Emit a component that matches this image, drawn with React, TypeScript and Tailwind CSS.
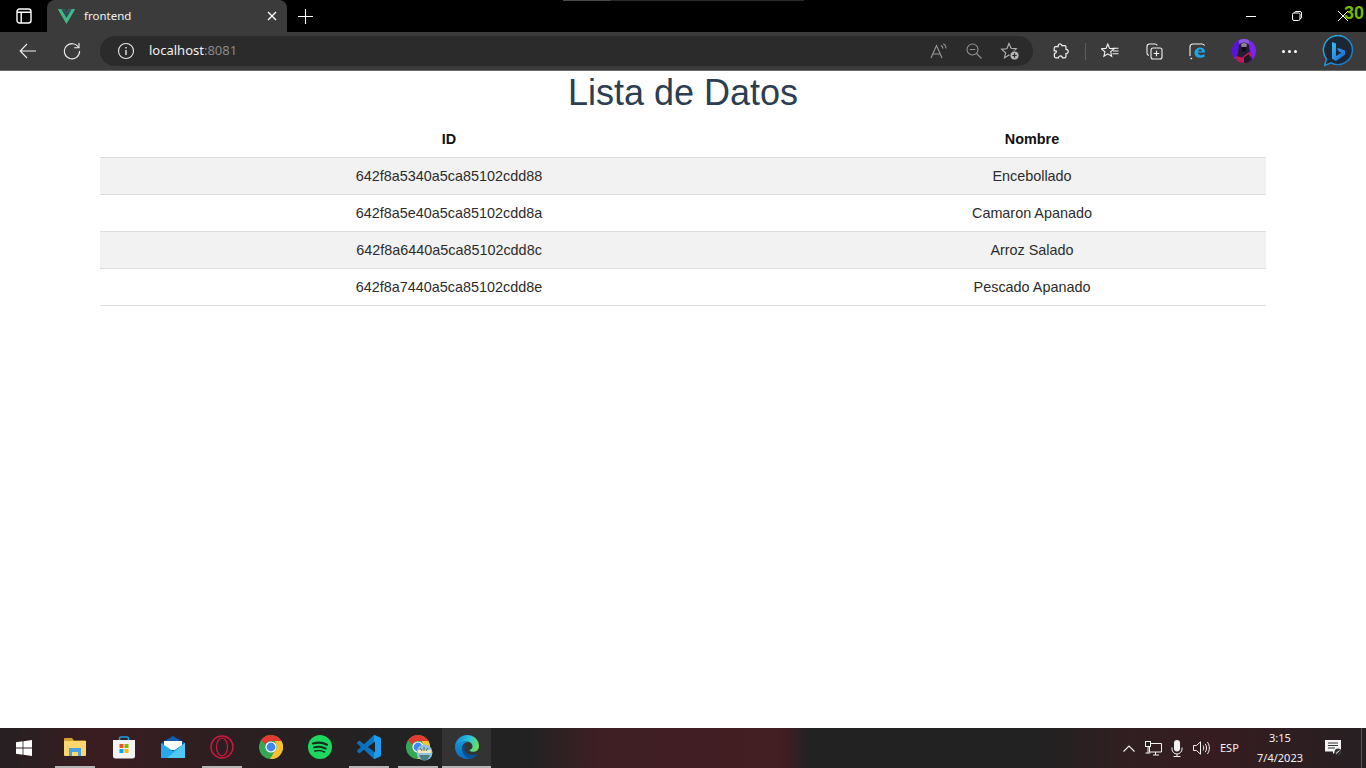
const rows = [
  { id: "642f8a5340a5ca85102cdd88", nombre: "Encebollado" },
  { id: "642f8a5e40a5ca85102cdd8a", nombre: "Camaron Apanado" },
  { id: "642f8a6440a5ca85102cdd8c", nombre: "Arroz Salado" },
  { id: "642f8a7440a5ca85102cdd8e", nombre: "Pescado Apanado" },
];

const TabStrip = () => {
  return (
    <div className="relative flex h-8 shrink-0 items-end bg-black text-white">
      <div className="absolute left-[563px] top-0 flex h-px w-[241px]">
        <div className="w-12 bg-[#4a4a4a]" />
        <div className="flex-1 bg-[#2a2a2a]" />
      </div>
      <div className="flex h-8 w-[47px] items-center justify-center">
        <svg width="16" height="16" viewBox="0 0 16 16" fill="none" stroke="white" strokeWidth="1.4">
          <rect x="1" y="1" width="14" height="14" rx="2.5" />
          <path d="M1 4.2h14M5.2 4.2V15" />
        </svg>
      </div>
      <div className="flex h-8 w-[240px] items-center rounded-t-lg bg-[#3b3b3b] pl-[11px] pr-[10px]">
        <svg width="17" height="15" viewBox="0 0 256 221">
          <path fill="#41B883" d="M204.8 0H256L128 220.8 0 0h97.92L128 51.2 157.44 0h47.36Z" />
          <path fill="#41B883" d="m0 0 128 220.8L256 0h-51.2L128 132.48 50.56 0H0Z" />
          <path fill="#35495E" d="M50.56 0 128 133.12 204.8 0h-47.36L128 51.2 97.92 0H50.56Z" />
        </svg>
        <span className="ml-[9px] flex-1 font-['Noto_Sans',sans-serif] text-[11.5px] text-[#f2f2f2]">frontend</span>
        <svg width="10" height="10" viewBox="0 0 10 10" stroke="white" strokeWidth="1.3">
          <path d="M1 1l8 8M9 1l-8 8" />
        </svg>
      </div>
      <div className="flex h-8 w-9 items-center justify-center">
        <svg width="15" height="15" viewBox="0 0 15 15" stroke="white" strokeWidth="1.1">
          <path d="M7.5 0v15M0 7.5h15" />
        </svg>
      </div>
      <div className="flex-1" />
      <div className="flex h-8 w-[138px] items-center">
        <div className="flex w-[46px] justify-center">
          <div className="h-px w-[10px] bg-white" />
        </div>
        <div className="flex w-[46px] justify-center">
          <svg width="10" height="10" viewBox="0 0 10 10" fill="none" stroke="white" strokeWidth="1">
            <rect x="0.5" y="2" width="7.5" height="7.5" rx="1.5" />
            <path d="M2.5 2V1.8A1.3 1.3 0 0 1 3.8.5h4.2A1.5 1.5 0 0 1 9.5 2v4.2A1.3 1.3 0 0 1 8 7.5" />
          </svg>
        </div>
        <div className="flex w-[46px] justify-center">
          <svg width="10" height="10" viewBox="0 0 10 10" stroke="white" strokeWidth="1">
            <path d="M0 0l10 10M10 0L0 10" />
          </svg>
        </div>
      </div>
      <span className="absolute left-[1344px] top-[2px] font-['Liberation_Sans',sans-serif] text-[18px] font-bold leading-[22px] text-[#76b900]">
        30
      </span>
    </div>
  );
};

const Toolbar = () => {
  return (
    <div className="flex h-[39px] shrink-0 items-center border-b border-b-[#6b6b6b] bg-[#3b3b3b] pl-[6px] text-white">
      <div className="flex w-11 justify-center">
        <svg width="18" height="16" viewBox="0 0 18 16" fill="none" stroke="#f2f2f2" strokeWidth="1.1">
          <path d="M17 8H1.2M8 1L1.2 8 8 15" />
        </svg>
      </div>
      <div className="flex w-11 justify-center">
        <svg width="18" height="18" viewBox="0 0 18 18" fill="none" stroke="#f2f2f2" strokeWidth="1.1">
          <path d="M15.6 5.5A7.6 7.6 0 1 0 16.6 9" />
          <path d="M16 1v4.8h-4.8" />
        </svg>
      </div>
      <div className="ml-[6px] flex h-[30px] w-[933px] items-center rounded-full bg-[#2b2b2b] pl-[17px]">
        <svg width="18" height="18" viewBox="0 0 18 18" fill="none" stroke="#e8e8e8" strokeWidth="1.1">
          <circle cx="9" cy="9" r="7.5" />
          <path d="M9 8v5M9 5v1.4" strokeWidth="1.4" />
        </svg>
        <span className="ml-[14px] flex-1 font-['Noto_Sans',sans-serif] text-[13px] text-[#f2f2f2]">
          localhost<span className="text-[#8a8a8a]">:8081</span>
        </span>
        <svg width="18" height="18" viewBox="0 0 18 18" fill="none" stroke="#9a9a9a" strokeWidth="1.1">
          <path d="M1 16L6.5 3.5 12 16M3 12h7" />
          <path d="M11 3.5c1.2.6 1.8 1.6 1.9 3M13.4 1.8c1.7.9 2.700 2.600 2.800 4.600" />
        </svg>
        <div className="ml-[18px]">
          <svg width="16" height="16" viewBox="0 0 16 16" fill="none" stroke="#8f8f8f" strokeWidth="1.1">
            <circle cx="6.5" cy="6.5" r="5.5" />
            <path d="M3.8 6.5h5.4M10.5 10.5L15.500 15.500" />
          </svg>
        </div>
        <div className="ml-[18px] mr-[13px]">
          <svg width="20" height="20" viewBox="0 0 20 20" fill="none" stroke="#b5b5b5" strokeWidth="1.1">
            <path d="M9 2.500l2.100 4.800 5.200.5-3.900 3.500 1.100 5.100L9 14l-4.500 2.900 1.100-5.100-3.900-3.500 5.200-.5z" />
            <circle cx="14.500" cy="14.500" r="4.600" fill="#b5b5b5" stroke="#2b2b2b" strokeWidth="1" />
            <path d="M14.500 12.300v4.400M12.300 14.500h4.400" stroke="#2b2b2b" strokeWidth="1.200" />
          </svg>
        </div>
      </div>
      <div className="ml-[6px] flex w-11 justify-center">
        <svg width="16" height="17" viewBox="0 0 16 17" fill="none" stroke="#f2f2f2" strokeWidth="1.2">
          <path d="M6 1.2c1.4-.7 2.700.1 2.900 1.500h2.700c.8 0 1.400.6 1.400 1.400v2.200c1.600.2 2.400 1.300 2.200 2.600-.2 1-1 1.700-2.200 1.700v2.600c0 .8-.6 1.600-1.400 1.600H9.600c-.3-1.400-1.100-2-2.200-2-1 0-1.800.7-2 2H3c-.9 0-1.600-.8-1.600-1.600v-2.500c1.300-.2 2-1 2-2.100S2.600 7.900 1.200 7.800V5.200c0-.9.7-1.600 1.600-1.600h2.400C5 2.600 5.200 1.700 6 1.200z" />
        </svg>
      </div>
      <div className="ml-[2px] h-[17px] w-px bg-[#5e5e5e]" />
      <div className="ml-[2px] flex w-11 justify-center">
        <svg width="18" height="16" viewBox="0 0 18 16" fill="none" stroke="#f2f2f2" strokeWidth="1.1">
          <path d="M6.800 1l1.800 4.400 4.600.4-3.500 3 1 4.500-3.900-2.400-3.900 2.400 1-4.500L.4 5.800 5 5.400z" />
          <path d="M12 8h5.500M11.500 5.300h6M11.500 10.800h6" />
        </svg>
      </div>
      <div className="flex w-11 justify-center">
        <svg width="17" height="17" viewBox="0 0 17 17" fill="none" stroke="#f2f2f2" strokeWidth="1.1">
          <path d="M3 12.500C1.800 12.200 1 11.200 1 10V3.500C1 2.100 2.100 1 3.500 1H9c1 0 1.800.5 2.300 1.400" />
          <rect x="5" y="5" width="11" height="11" rx="2" />
          <path d="M10.500 7.800v5.400M7.800 10.500h5.400" />
        </svg>
      </div>
      <div className="flex w-11 justify-center">
        <svg width="18" height="17" viewBox="0 0 18 17" fill="none">
          <path d="M1 13V4a3 3 0 0 1 3-3h9a3 3 0 0 1 2.600 1.500" stroke="#f2f2f2" strokeWidth="1.1" />
          <path d="M1.500 15l1.600 1" stroke="#f2f2f2" strokeWidth="1.1" />
          <path d="M5.500 10c0-3.200 2.500-5.500 5.700-5.500 2.900 0 4.900 1.900 4.900 5H9c.1 1.800 1.400 2.700 3 2.700 1.200 0 2.400-.4 3.500-1.100v2.700c-1.100.6-2.500 1-3.900 1-3.800 0-6.100-2-6.100-4.800zm3.700-1.800h3.700c-.1-1.100-.8-1.700-1.800-1.700-1 0-1.700.6-1.900 1.700z" fill="#1ea5e8" />
        </svg>
      </div>
      <div className="ml-[2px] flex w-11 justify-center">
        <svg width="24" height="24" viewBox="0 0 24 24">
          <defs>
            <clipPath id="avatarClip">
              <circle cx="12" cy="12" r="12" />
            </clipPath>
          </defs>
          <g clipPath="url(#avatarClip)">
            <rect width="24" height="24" fill="#7a22f0" />
            <circle cx="3" cy="10" r="8" fill="#5a14d8" />
            <circle cx="12" cy="3" r="5" fill="#8a5ae0" />
            <path d="M7 6c1.500-3.500 8.500-3.500 10 0l1 7 3 11H3l3-10z" fill="#241c30" />
            <path d="M9 5c1.500-1.500 4.500-1.500 6 0l-.5 3h-5z" fill="#8c8494" />
            <path d="M9.500 8h5l-.8 4.500h-3.400z" fill="#0f0c14" />
            <path d="M4 17l6 1.500 7-5.500 3 2-5 9H5z" fill="#c01a55" />
            <path d="M12 18.500l5-3.500 1 4-2.500 5H12z" fill="#1c1626" />
          </g>
        </svg>
      </div>
      <div className="ml-px flex w-11 justify-center gap-[3px]">
        <div className="size-[3px] rounded-full bg-white" />
        <div className="size-[3px] rounded-full bg-white" />
        <div className="size-[3px] rounded-full bg-white" />
      </div>
      <div className="ml-[5px] flex w-11 justify-center">
        <svg width="32" height="32" viewBox="0 0 32 32" fill="none">
          <defs>
            <linearGradient id="bingB" x1="0" y1="0" x2="1" y2="1">
              <stop offset="0" stopColor="#37bdf8" />
              <stop offset="1" stopColor="#1b5fd6" />
            </linearGradient>
            <linearGradient id="bingRing" x1="0" y1="0" x2="1" y2="1">
              <stop offset="0" stopColor="#2ab8f0" />
              <stop offset="1" stopColor="#1570c8" />
            </linearGradient>
          </defs>
          <path d="M2.500 30.500l2-6.500A14.500 14.500 0 1 1 9 27.800z" stroke="url(#bingRing)" strokeWidth="1.400" fill="#1d2733" strokeLinejoin="round" />
          <path d="M10 7l4 1.500v12.500l5.500-3.200-2.700-1.300-1.600-3.700 7.800 2.700v4.300L14 26l-4-2.200z" fill="url(#bingB)" />
        </svg>
      </div>
    </div>
  );
};

const DataTable = () => {
  return (
    <main className="flex-1 bg-white px-[100px] font-['Liberation_Sans',sans-serif]">
      <h1 className="pt-[1px] text-center text-[36px] font-normal leading-[41px] text-[#2c3e50]">Lista de Datos</h1>
      <table className="mt-2 w-full border-collapse text-center text-[14.4px] leading-[16px] text-[#2c2c2c]">
        <thead>
          <tr className="border-b border-b-[#dddddd]">
            <th className="h-9 w-[698px] font-bold text-[#111]">ID</th>
            <th className="h-9 font-bold text-[#111]">Nombre</th>
          </tr>
        </thead>
        <tbody>
          {rows.map((row, i) => (
            <tr key={row.id} className={`border-b border-b-[#dddddd] ${i % 2 === 0 ? "bg-[#f2f2f2]" : "bg-white"}`}>
              <td className="h-[37px]">{row.id}</td>
              <td className="h-[37px]">{row.nombre}</td>
            </tr>
          ))}
        </tbody>
      </table>
    </main>
  );
};

const AppButton = ({ open, active, children }: { open?: boolean; active?: boolean; children: React.ReactNode }) => {
  return (
    <div className={`flex h-10 w-[49px] flex-col items-center ${active ? "bg-[#333333]" : ""}`}>
      <div className="flex flex-1 items-center justify-center">{children}</div>
      <div className={`h-[2px] ${active ? "w-full" : "w-10"} ${open || active ? "bg-[#b4b4b4]" : ""}`} />
    </div>
  );
};

const ChromeIcon = () => {
  return (
    <svg width="24" height="24" viewBox="0 0 24 24">
      <circle cx="12" cy="12" r="12" fill="#34a853" />
      <path d="M12 0a12 12 0 0 1 10.400 6H12a6 6 0 0 0-5.600 3.700L2.100 5.200A12 12 0 0 1 12 0z" fill="#e33b2e" />
      <path d="M22.400 6A12 12 0 0 1 11 24l4.800-8.100A6 6 0 0 0 16.500 8l-.5-2z" fill="#fbc02d" />
      <circle cx="12" cy="12" r="5.600" fill="#ffffff" />
      <circle cx="12" cy="12" r="4.400" fill="#4285f4" />
    </svg>
  );
};

const Taskbar = () => {
  return (
    <div className="flex h-10 shrink-0 items-center bg-[linear-gradient(90deg,#262022_0px,#3a1d21_100px,#2a1f21_250px,#222222_400px,#232222_530px,#3e1f24_600px,#441e23_780px,#222222_810px,#222222_1040px,#301f21_1120px,#361c20_1220px,#262022_1366px)] font-['Noto_Sans',sans-serif] text-white">
      <div className="flex w-[50px] justify-center pr-[2px]">
        <svg width="16" height="16" viewBox="0 0 16 16" fill="white">
          <path d="M0 2.300L6.600 1.300V7.600H0zM7.400 1.200L16 0V7.600H7.400zM0 8.400H6.600V14.700L0 13.700zM7.400 8.400H16V16L7.400 14.800z" />
        </svg>
      </div>
      <AppButton open>
        <svg width="22" height="20" viewBox="0 0 22 20">
          <path d="M0 2a1 1 0 0 1 1-1h7l2 2.500h11a1 1 0 0 1 1 1V6H0z" fill="#d9a02c" />
          <path d="M0 4h22v14a1 1 0 0 1-1 1H1a1 1 0 0 1-1-1z" fill="#fbd76e" />
          <path d="M5 11h12v8h-3v-4H8v4H5z" fill="#4a9fe0" />
        </svg>
      </AppButton>
      <AppButton>
        <svg width="24" height="24" viewBox="0 0 24 24">
          <path d="M7.500 6V3.500a1.500 1.500 0 0 1 1.500-1.500h6a1.500 1.500 0 0 1 1.500 1.500V6" fill="none" stroke="#1ba1e2" strokeWidth="1.600" />
          <path d="M1 5h22v16a2.500 2.500 0 0 1-2.500 2.500h-17A2.500 2.500 0 0 1 1 21z" fill="#f4f4f4" />
          <rect x="7.500" y="9" width="4" height="4" fill="#f25022" />
          <rect x="12.500" y="9" width="4" height="4" fill="#7fba00" />
          <rect x="7.500" y="14" width="4" height="4" fill="#00a4ef" />
          <rect x="12.500" y="14" width="4" height="4" fill="#ffb900" />
        </svg>
      </AppButton>
      <AppButton>
        <svg width="24" height="22" viewBox="0 0 24 22">
          <path d="M0 7L12 0l12 7v3H0z" fill="#0f5fb0" />
          <path d="M3 5h18v9H3z" fill="#ffffff" />
          <path d="M0 7l12 8 12-8v15H0z" fill="#28a8ea" />
          <path d="M24 7v15H6z" fill="#50c8f5" />
        </svg>
      </AppButton>
      <AppButton open>
        <svg width="24" height="24" viewBox="0 0 24 24" fill="none" stroke="#d3183f">
          <circle cx="12" cy="12" r="11" strokeWidth="1.400" />
          <ellipse cx="12" cy="12" rx="5.500" ry="9" strokeWidth="1.200" />
        </svg>
      </AppButton>
      <AppButton>
        <ChromeIcon />
      </AppButton>
      <AppButton>
        <svg width="24" height="24" viewBox="0 0 24 24" fill="none">
          <circle cx="12" cy="12" r="12" fill="#1ed760" />
          <path d="M5 8.500c4.600-1.300 10-1 14 1.200" stroke="#13301d" strokeWidth="2.200" strokeLinecap="round" />
          <path d="M6 12.400c3.900-1 8.500-.7 11.800 1.200" stroke="#13301d" strokeWidth="1.900" strokeLinecap="round" />
          <path d="M6.800 16c3.200-.8 6.800-.5 9.700 1" stroke="#13301d" strokeWidth="1.500" strokeLinecap="round" />
        </svg>
      </AppButton>
      <AppButton open>
        <svg width="24" height="24" viewBox="0 0 24 24">
          <defs>
            <linearGradient id="vsGrad" x1="0" y1="0" x2="1" y2="0">
              <stop offset="0" stopColor="#0a6db8" />
              <stop offset="0.7" stopColor="#0a78c6" />
              <stop offset="0.7" stopColor="#1f9cf0" />
              <stop offset="1" stopColor="#1f9cf0" />
            </linearGradient>
          </defs>
          <path
            fill="url(#vsGrad)"
            d="M23.150 2.587L18.210.21a1.494 1.494 0 0 0-1.705.29l-9.460 8.630-4.120-3.128a.999.999 0 0 0-1.276.057L.327 7.261A1 1 0 0 0 .326 8.740L3.899 12 .326 15.260a1 1 0 0 0 .001 1.479L1.650 17.940a.999.999 0 0 0 1.276.057l4.120-3.128 9.460 8.630a1.492 1.492 0 0 0 1.704.290l4.942-2.377A1.500 1.500 0 0 0 24 20.060V3.939a1.500 1.500 0 0 0-.850-1.352zm-5.146 14.861L10.826 12l7.178-5.448v10.896z"
          />
        </svg>
      </AppButton>
      <AppButton open>
        <div className="relative size-6">
          <ChromeIcon />
          <svg className="absolute left-[10px] top-[9px]" width="17" height="17" viewBox="0 0 17 17">
            <circle cx="8.500" cy="8.500" r="8" fill="#8fc4dc" />
            <path d="M2 6h13v3H2z" fill="#efe6c2" />
            <path d="M4 4l2 3M8 3v4M12 4l-2 3" stroke="#7a6a3a" strokeWidth="1" />
            <path d="M3 11h11l-2.500 5h-6z" fill="#4a7f8a" />
          </svg>
        </div>
      </AppButton>
      <AppButton active>
        <svg width="24" height="24" viewBox="0 0 24 24">
          <defs>
            <linearGradient id="edgeTop" x1="0" y1="0.300" x2="1" y2="0.600">
              <stop offset="0" stopColor="#0f86d6" />
              <stop offset="0.500" stopColor="#2cc3d8" />
              <stop offset="1" stopColor="#6ee05a" />
            </linearGradient>
            <linearGradient id="edgeLeft" x1="0" y1="0" x2="0" y2="1">
              <stop offset="0" stopColor="#1593dd" />
              <stop offset="1" stopColor="#0a6cc0" />
            </linearGradient>
          </defs>
          <path d="M12 0C18.500 0 24 4.600 24 11c0 3.800-2.700 5.800-6 5.800-2 0-3.500-.7-3.700-1.800 2-.6 3.200-2 3.200-3.600 0-3-3-4.900-6-4.900C7 6.500 1.500 8.500 0 12 0 5 5.500 0 12 0z" fill="url(#edgeTop)" />
          <path d="M0 12c1.500-3.500 6-5.500 10.500-5.500 1 0 2 .2 3 .6-4.500.3-6.300 3.200-6.300 6 0 5 4 9.500 9.300 10-1.300.6-2.900.9-4.500.9C5.500 24 0 19 0 12z" fill="url(#edgeLeft)" />
          <path d="M11.500 10c-2.800.6-4.300 2.600-4.300 4.600 0 4.500 3.800 9 9.300 9.300 2.700-1 4.800-2.900 6-5.400-1.500.9-3.500 1.300-5.300 1.300-4.300 0-7.900-2.700-7.900-6 0-1.400.7-2.900 2.200-3.800z" fill="#0c4f92" />
        </svg>
      </AppButton>
      <div className="flex-1" />
      <div className="flex w-6 justify-center">
        <svg width="12" height="7" viewBox="0 0 12 7" fill="none" stroke="#f2f2f2" strokeWidth="1.100">
          <path d="M.500 6.500L6 1l5.500 5.500" />
        </svg>
      </div>
      <div className="flex w-6 justify-center">
        <svg width="17" height="15" viewBox="0 0 17 15" fill="none" stroke="#f2f2f2" strokeWidth="1">
          <path d="M4.500 2.500h12v8.500h-12zM8 14h6M10.500 11v3" />
          <rect x="0.500" y="0.500" width="5" height="5" fill="#222" />
          <path d="M3 5.500V12M.5 12h5" />
        </svg>
      </div>
      <div className="flex w-6 justify-center">
        <svg width="12" height="17" viewBox="0 0 12 17" fill="none">
          <rect x="3" y="0" width="6" height="11.500" rx="3" fill="#f2f2f2" />
          <path d="M1 7.500v1.500a5 5 0 0 0 10 0V7.500M6 14v2.500M2.500 16.500h7" stroke="#f2f2f2" strokeWidth="1" />
        </svg>
      </div>
      <div className="flex w-6 justify-center">
        <svg width="17" height="14" viewBox="0 0 17 14" fill="none" stroke="#f2f2f2" strokeWidth="1">
          <path d="M.500 4.500h3L7.500.800v12.400L3.500 9.500h-3z" />
          <path d="M10 4.500c1 1.500 1 3.500 0 5M12.200 2.800c1.800 2.500 1.800 5.900 0 8.400M14.400 1c2.600 3.500 2.600 8.500 0 12" />
        </svg>
      </div>
      <div className="w-[34px] pl-[7px] text-[11px] leading-[14px] text-[#f2f2f2]">ESP</div>
      <div className="w-[66px] text-center text-[11px] leading-[20px] text-[#f2f2f2]">
        <div>3:15</div>
        <div>7/4/2023</div>
      </div>
      <div className="flex w-[40px] justify-center">
        <svg width="17" height="16" viewBox="0 0 17 16">
          <path d="M0 0h16v11.500h-5L8 14v-2.500H0z" fill="#f4f4f4" />
          <path d="M3 3h10M3 5.500h10M3 8h7" stroke="#333" strokeWidth="1" />
          <circle cx="13" cy="12" r="3.500" fill="#333" />
          <path d="M11 13.500l3.500-3" stroke="#f4f4f4" strokeWidth="1" />
        </svg>
      </div>
      <div className="ml-2 h-10 w-[5px] border-l border-l-[#555]" />
    </div>
  );
};

export default function App() {
  return (
    <div className="flex h-screen w-full flex-col overflow-hidden">
      <TabStrip />
      <Toolbar />
      <DataTable />
      <Taskbar />
    </div>
  );
}
